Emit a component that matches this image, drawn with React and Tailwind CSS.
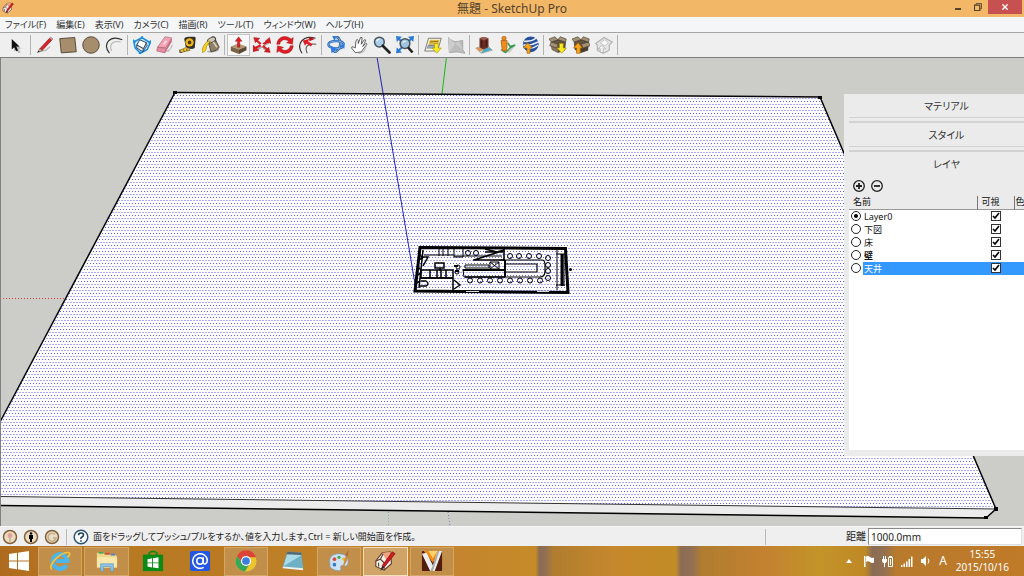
import { useState } from 'react'

const MENUS = ['ファイル(F)', '編集(E)', '表示(V)', 'カメラ(C)', '描画(R)', 'ツール(T)', 'ウィンドウ(W)', 'ヘルプ(H)']

const LAYERS = ['Layer0', '下図', '床', '壁', '天井']

// Toolbar drawings, all on a 24x24 grid
const ICONS = {
  select: (
    <>
      <path d="M8 7v14l3-3 3 5 3-1-3-5h4z" fill="#bbb" />
      <path d="M5 4v14l3.400-3 2.400 5.400 2.600-1.200-2.400-5.200h4.400z" fill="#111" />
    </>
  ),
  pencil: (
    <>
      <path d="M4 21l9-2 6-5" stroke="#bdbdbd" strokeWidth="2" fill="none" />
      <path d="M5 17L18 3l3 2.500L8.500 19z" fill="#d8202a" stroke="#8c1016" strokeWidth=".7" />
      <path d="M18 3l1.600-1.500 3 2.500L21 5.500z" fill="#e89aa0" stroke="#6b3b3b" strokeWidth=".6" />
      <path d="M5 17l-3 5 6.500-3z" fill="#e8c48c" stroke="#333" strokeWidth=".7" />
      <path d="M3.500 19.500L2 22l2.800-1.200z" fill="#111" />
    </>
  ),
  rect: <path d="M1 3.500L21 2 23 21 3 22.500z" fill="#a68d6c" stroke="#4d4234" strokeWidth="1.200" />,
  circle: <circle cx="12" cy="12" r="11" fill="#a68d6c" stroke="#4d4234" strokeWidth="1.200" />,
  arc: (
    <>
      <path d="M9 20C5 13 9 5 21 8" fill="none" stroke="#b5b5b5" strokeWidth="1.500" />
      <path d="M6 23C-4 10 7-2 23 5" fill="none" stroke="#333" strokeWidth="1.600" />
    </>
  ),
  component: (
    <>
      <path d="M1 8l11-6 11 7-4 9-9 5-7-7z" fill="#cfe9fc" stroke="#168ce0" strokeWidth="2" />
      <path d="M9 5l9 4-4 8-9-5z" fill="#fff" stroke="#24435e" strokeWidth="1.300" />
      <path d="M5 12l9 5-1 4-8-5z" fill="#e4e4e4" stroke="#24435e" strokeWidth="1.200" />
      <path d="M14 17l4-8 1 4-6 8z" fill="#9aa6ae" stroke="#24435e" strokeWidth=".8" />
      <path d="M0 5l3 4M24 6l-3 4M8 24l3-3M12 0v4" stroke="#168ce0" strokeWidth="2" />
    </>
  ),
  eraser: (
    <>
      <path d="M8 21l10-3 4-8v4l-5 7z" fill="#bbb" />
      <path d="M2 15L12 1l9 1.500-8 13z" fill="#f4a3b5" stroke="#a3586a" strokeWidth=".8" />
      <path d="M2 15l11 1.500-1 6L1 20z" fill="#e88ba2" stroke="#a3586a" strokeWidth=".8" />
      <path d="M13 16.500l8-14v5l-9 15z" fill="#c8677f" />
      <path d="M12 6l3 .5-3 5-3-.5z" fill="#fcd5de" />
    </>
  ),
  tape: (
    <>
      <path d="M7 4q1-3 6-3h7q3 0 2 4l-1 11q-5 3-12-1z" fill="#33302a" />
      <circle cx="14" cy="8.500" r="5.500" fill="#f2b71c" />
      <circle cx="14" cy="8.500" r="2.500" fill="#4a3a12" />
      <path d="M10 15l-9 4 2 3 12-3z" fill="#f0c22c" stroke="#6e5610" strokeWidth=".8" />
      <path d="M1 18v4h3M6 18l1 3M10 17l1 3" stroke="#333" fill="none" />
    </>
  ),
  bucket: (
    <>
      <path d="M6 21q8 3 17-2l-2-4z" fill="#aaa" />
      <path d="M8 7l9-4 6 12q-3 5-11 6z" fill="#8f8268" stroke="#3c362b" />
      <ellipse cx="12.500" cy="5.500" rx="6" ry="3.200" transform="rotate(-24 12 5)" fill="#cfc6b2" stroke="#3c362b" />
      <path d="M8 7q-8 5-8 15 6-1 6-8l5-7z" fill="#f6d313" stroke="#8b7510" strokeWidth=".7" />
      <path d="M15 8l5 7" stroke="#ddd3bb" strokeWidth="2" />
      <path d="M13 1q6-1 5 7" fill="none" stroke="#444" />
    </>
  ),
  pushpull: (
    <>
      <path d="M1 14l10-4 11 4-10 4z" fill="#b39773" />
      <path d="M1 14l11 4v6L1 20z" fill="#7c6448" />
      <path d="M12 18l10-4v5l-10 5z" fill="#5c4932" />
      <path d="M11.500 1l4.500 6h-3v8h-3V7H7z" fill="#e01b22" stroke="#8b0d12" strokeWidth=".5" />
    </>
  ),
  move: (
    <>
      <path d="M6 7l13 14M4 19L21 9" stroke="#aaa" strokeWidth="2.500" />
      <path d="M5 6l14 12M3 16L21 7" stroke="#e01b22" strokeWidth="2.800" />
      <path d="M1 2l8 1-6 6zM22 2l2 8-8-3zM23 22l-8-1 6-6zM0 12l8 7-8 2z" fill="#e01b22" stroke="#8b0d12" strokeWidth=".5" />
      <path d="M12 9l2.500 2.500L12 14l-2.500-2.500z" fill="#fff" />
    </>
  ),
  rotate: (
    <g fill="#e01b22" stroke="#8b0d12" strokeWidth=".5">
      <path d="M1 11C2 0 14-2 20 4l3-2-1 9-8-2 3-2C12 3 6 5 5 11z" />
      <path d="M23 13c-1 11-13 13-19 7l-3 2 1-9 8 2-3 2c5 4 11 2 12-4z" />
    </g>
  ),
  offset: (
    <>
      <path d="M4 23C-4 11 5-2 22 3" fill="none" stroke="#333" strokeWidth="1.600" />
      <path d="M11 23C7 15 11 9 23 11" fill="none" stroke="#555" strokeWidth="1.400" />
      <path d="M5 6l9-2-2 3 6 4-2 3-6-4-2 3z" fill="#e01b22" />
      <path d="M13 1l8 3-7 3z" fill="#c41218" />
    </>
  ),
  orbit: (
    <>
      <path d="M22 10C19 5 3 6 2 11s14 8 20 3" fill="none" stroke="#2a66b5" strokeWidth="3.200" />
      <path d="M10 2c6-3 9 5 7 12s-7 9-9 5" fill="none" stroke="#22528f" strokeWidth="3.200" />
      <path d="M10 2c6-3 9 5 7 12s-7 9-9 5" fill="none" stroke="#8cc0f7" strokeWidth="1.300" />
      <path d="M22 10C19 5 3 6 2 11s14 8 20 3" fill="none" stroke="#7db4f0" strokeWidth="1.200" />
      <path d="M5 14l8 3-7 6zM7 0l5 0-2 7zM24 9l-1 8-6-4z" fill="#2a7ce6" />
    </>
  ),
  pan: (
    <>
      <path d="M9 22q8 2 11-6l3-4-4 9-6 3z" fill="#b4b4b4" />
      <path d="M7 22L2 16q0-3 3-1l2 1 1-10q2-3 3 0l0 4 3-8q3-1 2 2l-1 7 4-6q3-1 1 3l-3 6 4-4q3 0 0 3l-6 8-5 1z" fill="#fff" stroke="#333" strokeWidth="1" />
    </>
  ),
  zoom: (
    <>
      <path d="M13 15l8 8 2-1-8-8z" fill="#aaa" />
      <circle cx="8.500" cy="8" r="6.500" fill="#a9cdea" stroke="#49525c" strokeWidth="2" />
      <path d="M5 7q1-3 4-3" stroke="#fff" fill="none" strokeWidth="1.600" />
      <path d="M13 13l9 9" stroke="#222" strokeWidth="3.500" strokeLinecap="round" />
    </>
  ),
  extents: (
    <>
      <path d="M0 0l8 1-7 7zM24 0l-8 1 7 7zM0 23l1-8 7 7z" fill="#2d7ad6" />
      <path d="M3 3l5 5M21 3l-5 5M8 15l-5 5" stroke="#2d7ad6" strokeWidth="2.500" />
      <circle cx="12" cy="10" r="6.500" fill="#9fc4df" stroke="#4a525a" strokeWidth="2" />
      <path d="M9 9q1-2 4-2" stroke="#fff" fill="none" strokeWidth="1.400" />
      <path d="M16 15l6 7" stroke="#222" strokeWidth="3.500" />
    </>
  ),
  location: (
    <>
      <path d="M6 3h17l-5 17H1z" fill="#faf7e6" stroke="#555" />
      <path d="M8 5h13l-2 6H6z" fill="#e2bd3c" />
      <path d="M5 12h11l-1 5H3z" fill="#94a7b6" />
      <path d="M8 8l11-1M6 12h13" stroke="#705a23" />
      <path d="M14 10h5v6h4l-6 7-6-7h3z" fill="#f9ec1d" stroke="#a68d10" strokeWidth=".8" />
    </>
  ),
  terrain: (
    <>
      <path d="M2 2q6 7 13 5l6-1v12l3 5q-10-3-21-1z" fill="#bdbdbd" stroke="#9c9c9c" />
      <path d="M2 2l9 8 4-3 6 11-10-8-8 12z" fill="#cdcdcd" />
    </>
  ),
  building: (
    <>
      <path d="M1 16l15-4 7 7-15 4z" fill="#d8dfcf" stroke="#777" strokeWidth=".7" />
      <path d="M9 21l6-7 8 4-14 5z" fill="#4fa9c7" />
      <path d="M2 16l6-1 3 4-5 2z" fill="#e0914a" />
      <path d="M6 3q5-3 12 0v12l-7 3-5-3z" fill="#6b2e25" />
      <path d="M6 3q5-3 12 0l-6 3z" fill="#9b5c4c" />
      <path d="M9 6v9M15 5v9" stroke="#40160f" strokeWidth="1.500" />
    </>
  ),
  street: (
    <>
      <path d="M5 22l8-3 10-6-7 9z" fill="#ccc" />
      <path d="M4 18l6 4 6-6 7-4-7 2-3-5" fill="none" stroke="#3c9b4c" strokeWidth="2" />
      <circle cx="8" cy="3" r="2.800" fill="#f08a18" stroke="#964a08" strokeWidth=".8" />
      <path d="M4 6h8v8l-1 6H6l-1-6z" fill="#f08a18" stroke="#964a08" strokeWidth=".8" />
    </>
  ),
  earth: (
    <>
      <circle cx="13" cy="11" r="10.500" fill="#27509b" />
      <path d="M4 7Q13 8 20 3M3 12q11 1 20-4M10 17q8-1 13-5" stroke="#e5edfc" strokeWidth="2" fill="none" />
      <path d="M8 23v-7H3l6-7 6 7h-3v7z" fill="#f9a31a" stroke="#9b5b05" strokeWidth=".8" />
    </>
  ),
  boxDown: (
    <>
      <path d="M3 8l9-3 10 3-1 11-9 3-8-4z" fill="#62523f" stroke="#342a1f" strokeWidth=".8" />
      <path d="M3 8l9 3v11l-8-4z" fill="#86745b" />
      <path d="M3 8L0 4l8-3 4 4zM12 5l3-4 8 3-1 4zM3 8l-2 5 9 3 2-5z" fill="#a39075" stroke="#40362a" strokeWidth=".8" />
      <path d="M14 10h5v6h4l-6 7-6-7h3z" fill="#f9ec1d" stroke="#a68d10" strokeWidth=".8" />
    </>
  ),
  boxUp: (
    <>
      <path d="M3 8l9-3 10 3-1 11-9 3-8-4z" fill="#62523f" stroke="#342a1f" strokeWidth=".8" />
      <path d="M12 11l10-3-1 11-9 3z" fill="#4b3e2f" />
      <path d="M3 8L0 4l8-3 4 4zM12 5l3-4 8 3-1 4zM12 11l10-3 2 5-9 3z" fill="#a39075" stroke="#40362a" strokeWidth=".8" />
      <path d="M6 23v-7H2l6-7 6 7h-3v7z" fill="#f9a31a" stroke="#9b5b05" strokeWidth=".8" />
    </>
  ),
  share: (
    <>
      <path d="M1 10l11-8 11 6-4 4v7l-8 4-8-4v-7z" fill="#e6e6e6" stroke="#b0b0b0" strokeWidth="1.500" />
      <path d="M7 9l6-4 5 4-5 4z" fill="#fafafa" stroke="#b5b5b5" />
      <path d="M7 22v-5H4l5-5 5 5h-3v5z" fill="#f2f2f2" stroke="#aaa" />
    </>
  ),
}

const TOOL_GROUPS = [
  [['select', '選択']],
  [['pencil', '線'], ['rect', '長方形'], ['circle', '円'], ['arc', '円弧']],
  [['component', 'コンポーネント'], ['eraser', '消しゴム'], ['tape', 'メジャー'], ['bucket', 'ペイント']],
  [['pushpull', 'プッシュ/プル'], ['move', '移動'], ['rotate', '回転'], ['offset', 'オフセット']],
  [['orbit', 'オービット'], ['pan', 'パン表示'], ['zoom', 'ズーム'], ['extents', '全体表示']],
  [['location', '場所を追加'], ['terrain', '地形']],
  [['building', '建物'], ['street', '写真テクスチャ'], ['earth', 'Google Earth']],
  [['boxDown', 'モデルを取得'], ['boxUp', 'モデルを共有'], ['share', 'コンポーネントを共有']],
]

function SketchUpMark({ className }) {
  return (
    <svg viewBox="0 0 24 24" className={className} aria-hidden="true">
      <path d="M2 12L9 3l9-1 1 13-8 7-9-4z" fill="#f4efe6" stroke="#5b3a2a" strokeWidth="1.200" />
      <path d="M9 3l9-1 1 7-5 3z" fill="#efa27c" />
      <path d="M2 12l5-2 4 4v8M7 10l3-6M5 14v4" fill="none" stroke="#5b3a2a" strokeWidth="1.200" />
      <path d="M9 17L20 2l3 2-12 15z" fill="#d41920" stroke="#701014" strokeWidth=".7" />
      <path d="M9 17l-2 6 4-4z" fill="#222" />
    </svg>
  )
}

function TitleBar() {
  return (
    <header className="relative flex h-[17px] shrink-0 items-start justify-end bg-[#f2b868]">
      <SketchUpMark className="absolute left-0.5 top-0.5 h-3 w-3" />
      <h1 className="absolute inset-x-0 top-0 text-center text-[12px] leading-[18px] text-[#54422b]">無題 - SketchUp Pro</h1>
      <div className="relative flex h-3.5 pr-0.5">
        <button aria-label="最小化" className="flex w-5 items-end justify-center pb-1">
          <span className="h-0.5 w-1.5 bg-[#54422b]" />
        </button>
        <button aria-label="元に戻す" className="grid w-5 place-items-center">
          <svg viewBox="0 0 9 9" className="h-2 w-2" fill="none" stroke="#54422b">
            <path d="M2.500 2V.5h6v6H7" />
            <path d="M.5 2.500h6v6h-6z" strokeWidth="1.400" />
          </svg>
        </button>
        <button aria-label="閉じる" className="grid w-[34px] place-items-center bg-[#c75050]">
          <svg viewBox="0 0 8 8" className="h-1.5 w-1.5" stroke="#fff" strokeWidth="1.800">
            <path d="M.5.5l7 7M7.500.5l-7 7" />
          </svg>
        </button>
      </div>
    </header>
  )
}

function Toolbar() {
  return (
    <div className="flex h-[25px] shrink-0 items-center border-t border-[#a5a5a5] bg-[#efefef] pl-[5px]">
      {TOOL_GROUPS.map((group, i) => (
        <div key={i} className="flex items-center">
          {group.map(([icon, label]) => (
            <button
              key={icon}
              aria-label={label}
              className={`grid h-[22px] w-[23px] place-items-center ${icon === 'pushpull' ? 'border border-[#c2c2c2] bg-[#f8f8f8]' : ''}`}
            >
              <svg viewBox="0 0 24 24" className="h-[18px] w-[18px]">{ICONS[icon]}</svg>
            </button>
          ))}
          <span className="mx-0.5 h-5 w-px bg-[#b3b3b3]" />
        </div>
      ))}
    </div>
  )
}

// Floor plan sits in the middle of the slab, black line work on the selected face
function FloorPlan() {
  const bottomSeats = [470, 480, 490, 500, 510, 520, 530, 540]
  const topSeats = [510, 519, 529, 539]
  return (
    <g fill="none" stroke="#000">
      <path d="M420 247.500L565.500 248.500 568 292.500 415 291z" strokeWidth="3" />
      <path d="M423 250L419 288" strokeWidth="1.500" />
      <path d="M418 253l5 5M418 260l5-2M417 266l5 5M416 276l5-3M415 284l5-3" strokeWidth="1.500" />
      <path d="M557 250v40M564 254v32M556 285h9M556 254h9" />
      <path d="M562 254v32" strokeWidth="3" />
      <path d="M424 255h30M439 249v7M443 249v7M448 249v7M454 249v8h9v-8M454 256h48" />
      <path d="M473 260h32M485 249l12 3 7-2M474 260l28-9M504 249v12M485 252h18" strokeWidth="1.600" />
      <path d="M423 257h5l-5 9M435 263h9v5h-9zM440 268v3M421 270h32v8h-32zM430 270v8M437 270v8M441 270v8M446 270v7M453 270v20" strokeWidth="1.500" />
      <path d="M420 278h33M421 281h5q4 3 0 5h-6M454 280l6 5-6 4" strokeWidth="1.400" />
      <path d="M463 270h42v7h-41zM465 265h24v3h-24zM490 262h9v7h-9zM490 262l9 7M499 262l-9 7" />
      <path d="M505 260v17M463 270h42" strokeWidth="2" />
      <path d="M505 264h32v8h-32M500 260h42q3 0 3 5v6q0 6-5 6h-36" strokeWidth="1.200" />
      <path d="M465 277h40" strokeWidth="1.600" />
      <path d="M454 266h4M455 271h4" strokeWidth="2" />
      {bottomSeats.map((x) => <circle key={x} cx={x} cy="280.500" r="2.500" />)}
      {topSeats.map((x) => <circle key={x} cx={x} cy="256" r="2.500" />)}
      {[258, 265, 271, 278].map((y) => <circle key={y} cx="548" cy={y} r="2.500" />)}
      <circle cx="468" cy="253" r="2.500" />
      <circle cx="476" cy="253" r="2.500" />
      <circle cx="458" cy="267" r="2" />
      <circle cx="457" cy="272" r="2" />
      <circle cx="570.500" cy="269.500" r="1.500" fill="#000" stroke="none" />
      <path d="M466 291.500h13M537 291.500h12" stroke="#ddd" />
    </g>
  )
}

function Viewport() {
  return (
    <svg viewBox="0 57 1024 469" preserveAspectRatio="xMidYMid slice" className="absolute inset-0 h-full w-full" aria-label="モデル">
      <defs>
        <pattern id="dots" width="3" height="6" x="0" y="95" patternUnits="userSpaceOnUse" shapeRendering="crispEdges">
          <rect width="3" height="6" fill="#fff" />
          <rect width="1" height="1" fill="#5c5cf0" />
          <rect x="1" y="3" width="2" height="1" fill="#aaaafa" />
        </pattern>
      </defs>
      <path d="M446.500 57L442 94" stroke="#18b818" />
      <path d="M388.500 512v14" stroke="#7dbb7d" strokeDasharray="1 2" />
      <path d="M448 512l2 14" stroke="#7777bb" strokeDasharray="1 2" />
      <path d="M-5 496L996 509 986 518-5 506z" fill="#ececec" />
      <path d="M175 92.500L820 97 996 509-40 496z" fill="url(#dots)" />
      <path d="M0 298.500h66" stroke="#d83c3c" strokeDasharray="1 2" />
      <path d="M377 57L416 290" stroke="#2424b0" fill="none" />
      <path d="M0 422L175 92.500" stroke="#000" strokeWidth="1.500" />
      <path d="M173 92.500L820 97" stroke="#000" strokeWidth="1.500" />
      <path d="M820 97L996 509" stroke="#000" strokeWidth="1.500" />
      <path d="M0 496.500L996 509" stroke="#333" />
      <path d="M0 505.500L986 518" stroke="#000" strokeWidth="1.500" />
      <path d="M986 518l10-9" stroke="#000" strokeWidth="1.500" />
      <path d="M173 91h4v3h-4zM818 96h4v3h-4zM994 507h4v4h-4zM984 516h4v3h-4z" />
      <FloorPlan />
      <path d="M0 57.500h1024M.5 57v469" stroke="#808080" />
    </svg>
  )
}

function LayerTable() {
  const [active, setActive] = useState('Layer0')
  return (
    <table className="w-full table-fixed border-collapse text-left text-[9px] leading-[12px] text-[#111]">
      <thead>
        <tr className="h-[13px] border-b border-[#999] bg-[#ebebeb]">
          <th className="w-32 border-r border-[#777] p-0 pl-1 font-normal">名前</th>
          <th className="w-[37px] border-r border-[#777] p-0 pl-1 font-normal">可視</th>
          <th className="overflow-hidden p-0 pl-px font-normal whitespace-nowrap">色</th>
        </tr>
      </thead>
      <tbody>
        {LAYERS.map((name) => {
          const selected = name === '天井'
          return (
            <tr key={name} className="h-[13px]">
              <td className="p-0">
                <label className="flex h-[13px] items-center">
                  <span className="grid w-3.5 place-items-center">
                    <input
                      type="radio"
                      name="layer"
                      checked={active === name}
                      onChange={() => setActive(name)}
                      className="col-start-1 row-start-1 h-2.5 w-2.5 appearance-none rounded-full border border-[#222] bg-white"
                    />
                    {active === name && <span className="col-start-1 row-start-1 h-1 w-1 rounded-full bg-black" />}
                  </span>
                  <span className={`h-[13px] flex-1 pl-px leading-[13px] ${selected ? 'bg-[#3399ff] text-white' : ''} ${name === '壁' ? 'font-bold' : ''}`}>{name}</span>
                </label>
              </td>
              <td className={`p-0 ${selected ? 'bg-[#3399ff]' : ''}`}>
                <span className="ml-3.5 grid w-2.5 place-items-center">
                  <input
                    type="checkbox"
                    defaultChecked
                    aria-label={`${name} 可視`}
                    className="peer col-start-1 row-start-1 h-2.5 w-2.5 appearance-none border border-[#333] bg-white"
                  />
                  <svg viewBox="0 0 8 8" className="pointer-events-none invisible col-start-1 row-start-1 h-2 w-2 peer-checked:visible" fill="none" stroke="#000" strokeWidth="1.600">
                    <path d="M1 4l2 2 4-5" />
                  </svg>
                </span>
              </td>
              <td className={`p-0 ${selected ? 'bg-[#3399ff]' : ''}`} />
            </tr>
          )
        })}
      </tbody>
    </table>
  )
}

function LayerPanel() {
  return (
    <aside className="absolute right-0 top-[37px] flex h-[362px] w-[180px] flex-col overflow-hidden bg-[#ebebeb] pb-1.5 pl-[5px]">
      {['マテリアル', 'スタイル', 'レイヤ'].map((title, i) => (
        <h2 key={title} className={`shrink-0 ${i < 2 ? 'h-[29px] border-b-2 border-[#d2d2d2]' : 'h-7'}`}>
          <button className={`block h-6 w-full pl-5 text-center text-[10px] leading-6 text-[#333] ${i < 2 ? 'border-b border-[#d2d2d2]' : ''}`}>{title}</button>
        </h2>
      ))}
      <div className="flex h-4 shrink-0 items-start gap-1.5 pl-1">
        {['追加', '削除'].map((label, i) => (
          <button key={label} aria-label={label} className="h-3 w-3">
            <svg viewBox="0 0 12 12" className="h-3 w-3" fill="none" stroke="#222" strokeWidth="1.300">
              <circle cx="6" cy="6" r="5.300" />
              <path d={i === 0 ? 'M3 6h6M6 3v6' : 'M3 6h6'} strokeWidth="1.800" />
            </svg>
          </button>
        ))}
      </div>
      <div className="flex-1 bg-white">
        <LayerTable />
      </div>
    </aside>
  )
}

function StatusBar() {
  return (
    <div className="flex h-5 shrink-0 items-center border-t border-[#f8f8f8] bg-[#efefef] text-[9px] text-[#222]">
      <div className="flex gap-[5px] pl-0.5">
        <button aria-label="位置情報" className="h-4 w-4">
          <svg viewBox="0 0 16 16" className="h-4 w-4">
            <circle cx="8" cy="8" r="6.500" fill="#ecdcc0" stroke="#80613a" strokeWidth="1.500" />
            <path d="M8 13V8" stroke="#b39c85" />
            <circle cx="8" cy="6.500" r="2.500" fill="#e0a49a" />
          </svg>
        </button>
        <button aria-label="クレジット" className="h-4 w-4">
          <svg viewBox="0 0 16 16" className="h-4 w-4">
            <circle cx="8" cy="8" r="6.500" fill="#ecdcc0" stroke="#80613a" strokeWidth="1.500" />
            <circle cx="8" cy="4.500" r="1.300" />
            <path d="M6 6h4v4H9v3H7v-3H6z" />
          </svg>
        </button>
        <button aria-label="サインイン" className="h-4 w-4">
          <svg viewBox="0 0 16 16" className="h-4 w-4">
            <circle cx="8" cy="8" r="6.500" fill="#ecdcc0" stroke="#80613a" strokeWidth="1.500" />
            <path d="M11 5.500A4 4 0 1 0 12 9H9" fill="none" stroke="#c2ad8e" strokeWidth="1.500" />
          </svg>
        </button>
      </div>
      <span className="mx-1.5 h-4 w-px bg-[#bbb]" />
      <button aria-label="ヘルプ" className="h-4 w-4">
        <svg viewBox="0 0 16 16" className="h-4 w-4" fill="none">
          <circle cx="8" cy="8" r="6.800" fill="#fff" stroke="#2c5573" strokeWidth="1.500" />
          <path d="M5.500 6.300q0-2.300 2.500-2.300t2.500 2q0 1.200-1.500 2T8 10M8 11.300v1.500" stroke="#1c3c55" strokeWidth="1.600" />
        </svg>
      </button>
      <p className="ml-1 flex-1 whitespace-nowrap">面をドラッグしてプッシュ/プルをするか、値を入力します。Ctrl = 新しい開始面を作成。</p>
      <span className="h-4 w-px bg-[#bbb]" />
      <label htmlFor="distance" className="w-[102px] pr-0.5 text-right text-[10px]">距離</label>
      <input id="distance" defaultValue="1000.0mm" className="mr-0.5 h-[17px] w-[154px] border border-[#ddd] border-l-[#888] border-t-[#888] bg-white px-0.5 text-[10px]" />
    </div>
  )
}

const APPS = [
  {
    label: 'Internet Explorer',
    open: true,
    icon: (
      <>
        <path d="M19 16.500A8 8 0 1 1 20 12H8" fill="none" stroke="#49b6ee" strokeWidth="4.500" />
        <path d="M3 21C-2 17 13 1 22 3q2 2-2 5" fill="none" stroke="#f3c33c" strokeWidth="1.800" />
      </>
    ),
  },
  {
    label: 'エクスプローラー',
    open: true,
    icon: (
      <>
        <path d="M1 3h7l1 2h12l2 2v12H1z" fill="#f0d88c" />
        <path d="M3 2h5v2H3z" fill="#3bab58" />
        <path d="M10 3h5v2h-5z" fill="#d24b3e" />
        <path d="M16 4h5v2h-5z" fill="#4f7fc8" />
        <path d="M1 8h22v11H1z" fill="#f8e8ac" />
        <path d="M5 23v-8h14v8h-3v-5H8v5z" fill="#8ec4e6" stroke="#5d99c4" strokeWidth=".7" />
      </>
    ),
  },
  {
    label: 'ストア',
    icon: (
      <>
        <path d="M1 5h22v18H1z" fill="#0b8a15" />
        <path d="M8 7V3q4-3 8 0v4" fill="none" stroke="#0b8a15" strokeWidth="1.800" />
        <path d="M6 10l5-1v4.500H6zM12 9l6-1v5.500h-6zM6 14.500h5V19l-5-1zM12 14.500h6V20l-6-1z" fill="#fff" />
      </>
    ),
  },
  {
    label: 'メール',
    icon: (
      <>
        <rect x="1" y="1" width="22" height="22" rx="2" fill="#2458e0" />
        <circle cx="12" cy="12" r="3.500" fill="none" stroke="#fff" strokeWidth="1.700" />
        <path d="M15.500 8v5q0 3 2.500 2 2-1 2-4A8 8 0 1 0 16 19" fill="none" stroke="#fff" strokeWidth="1.700" />
      </>
    ),
  },
  {
    label: 'Google Chrome',
    open: true,
    icon: (
      <>
        <circle cx="12" cy="12" r="11.500" fill="#eac52f" />
        <path d="M2 6.500A11.500 11.500 0 0 1 23 8H12l-4 6z" fill="#db4437" />
        <path d="M2 6.500A11.500 11.500 0 0 0 11 23.500l5-9-8-1z" fill="#3aa757" />
        <circle cx="12" cy="12" r="5.500" fill="#fff" />
        <circle cx="12" cy="12" r="4.200" fill="#3b7de0" />
      </>
    ),
  },
  {
    label: 'メモ帳',
    icon: (
      <>
        <path d="M7 2l15 1 2 17-22-2z" fill="#a9dbe8" stroke="#608b9a" strokeWidth=".7" />
        <path d="M7 2l15 1v2.500L6 4.500z" fill="#54666e" />
        <path d="M2 18L22 6l2 14z" fill="#6fb0c6" />
        <path d="M2 18l22 2v2L2 20z" fill="#e8f4f7" />
      </>
    ),
  },
  {
    label: 'ペイント',
    open: true,
    icon: (
      <>
        <path d="M2 15Q0 5 11 4q12 0 11 10-1 5-5 3-4-1-3 3t-6 2-6-7z" fill="#cde3f2" stroke="#7397b3" strokeWidth=".8" />
        <circle cx="7" cy="10" r="2" fill="#da4d3a" />
        <circle cx="12" cy="8" r="1.800" fill="#47aa54" />
        <circle cx="7" cy="16" r="2" fill="#3b78c8" />
        <circle cx="17" cy="10" r="1.800" fill="#e7bf34" />
        <path d="M21 2l-3 8-3 13 6-12z" fill="#d28b3c" />
        <path d="M23 0l-4 5 2 3z" fill="#a36a3c" />
      </>
    ),
  },
  { label: 'SketchUp', open: true, active: true },
  {
    label: 'V-Ray',
    open: true,
    icon: (
      <>
        <rect x="1" y="1" width="22" height="22" rx="1" fill="#531d0d" />
        <path d="M3 1h17l-7 13z" fill="#f18a13" />
        <path d="M8 1h10l-5 8z" fill="#ffd26b" />
        <path d="M1 4l5-1 7 14 5-16h5l-8 22h-5z" fill="#eee" />
        <path d="M13 17l5-16h2l-7 22h-3z" fill="#aaa" />
      </>
    ),
  },
]

function TaskBar() {
  return (
    <footer className="flex h-[30px] shrink-0 items-center bg-[linear-gradient(90deg,#b06c1e_0%,#b57424_6%,#95714c_6.4%,#b57a24_7%,#ba7a22_24%,#96714c_24.4%,#bd7f26_25.500%,#c4852e_45%,#c58b28_52.300%,#8a6c55_52.700%,#927052_53.300%,#b07c30_54%,#c6882c_60%,#c28c26_66%,#8a6c55_66.500%,#927052_67.600%,#b07c30_68.500%,#c48230_75%,#c39428_80%,#bf8826_84.500%,#8a6c55_85.200%,#927052_86.300%,#b87a2c_87.500%,#c07a28_100%)] text-white">
      <button aria-label="スタート" className="grid w-[37px] shrink-0 place-items-center">
        <svg viewBox="0 0 20 20" className="h-5 w-5" fill="#fff">
          <path d="M0 3l8-1.200V9.500H0zM9 1.700L20 0v9.500H9zM0 10.500h8v7.700L0 17zM9 10.500h11V20L9 18.300z" />
        </svg>
      </button>
      <nav className="grid w-[418px] grid-cols-9">
        {APPS.map(({ label, icon, open, active }) => (
          <button
            key={label}
            aria-label={label}
            className={`mx-px grid h-[29px] place-items-center border ${active ? 'border-[#f3dfba] bg-[#d0a468]' : open ? 'border-[#d3a665] bg-[#c28f4a]' : 'border-transparent'}`}
          >
            {icon ? <svg viewBox="0 0 24 24" className="h-[22px] w-[22px]">{icon}</svg> : <SketchUpMark className="h-[22px] w-[22px]" />}
          </button>
        ))}
      </nav>
      <div className="ml-auto flex items-center gap-[7px] pr-[15px]">
        <button aria-label="隠れているインジケーター" className="mr-1">
          <svg viewBox="0 0 6 4" className="h-1 w-1.5" fill="#fff"><path d="M3 0l3 4H0z" /></svg>
        </button>
        <svg viewBox="0 0 12 12" className="h-3 w-3" fill="#fff" aria-label="アクション センター">
          <path d="M1 1h1.500v11H1zM3 1.500q2-1 4 .5t4 .5v5q-2 1-4-.5t-4 0z" />
        </svg>
        <svg viewBox="0 0 12 12" className="h-3 w-3" fill="none" stroke="#fff" aria-label="電源">
          <path d="M6.500 2.500h4v9h-4z" />
          <path d="M7 1h3v1H7zM8 4h1v6H8zM0 4h5v2L4 8H1L0 6zM1 1h1v3H1zM3 1h1v3H3zM2 8h1v4H2z" fill="#fff" stroke="none" />
        </svg>
        <svg viewBox="0 0 12 12" className="h-3 w-3" fill="#fff" aria-label="ネットワーク">
          <path d="M0 10h1.500v2H0zM2.500 8.500H4V12H2.500zM5 6.500h1.500V12H5zM7.500 4H9v8H7.500zM10 1.500h1.500V12H10z" />
        </svg>
        <svg viewBox="0 0 12 12" className="h-3 w-3" fill="#fff" aria-label="音量">
          <path d="M1 4h2l3-3v10L3 8H1z" />
          <path d="M8 3.500q2 2.500 0 5" fill="none" stroke="#fff" />
        </svg>
        <span className="text-[12px] leading-4">A</span>
        <time className="ml-0.5 text-center text-[10px] leading-[13px]">
          15:55
          <br />
          2015/10/16
        </time>
      </div>
    </footer>
  )
}

export default function App() {
  return (
    <div className="flex h-screen flex-col overflow-hidden bg-[#efefef] font-['Noto_Sans','Noto_Sans_CJK_JP',sans-serif] [font-feature-settings:'palt']">
      <TitleBar />
      <nav className="flex h-[15px] shrink-0 items-center gap-2.5 bg-[#f4f6f8] pl-[5px] text-[9px] leading-[14px] text-[#333]">
        {MENUS.map((m) => (
          <button key={m}>{m}</button>
        ))}
      </nav>
      <Toolbar />
      <main className="relative min-h-0 flex-1 overflow-hidden bg-[#cccdc8]">
        <Viewport />
        <LayerPanel />
      </main>
      <StatusBar />
      <TaskBar />
    </div>
  )
}
